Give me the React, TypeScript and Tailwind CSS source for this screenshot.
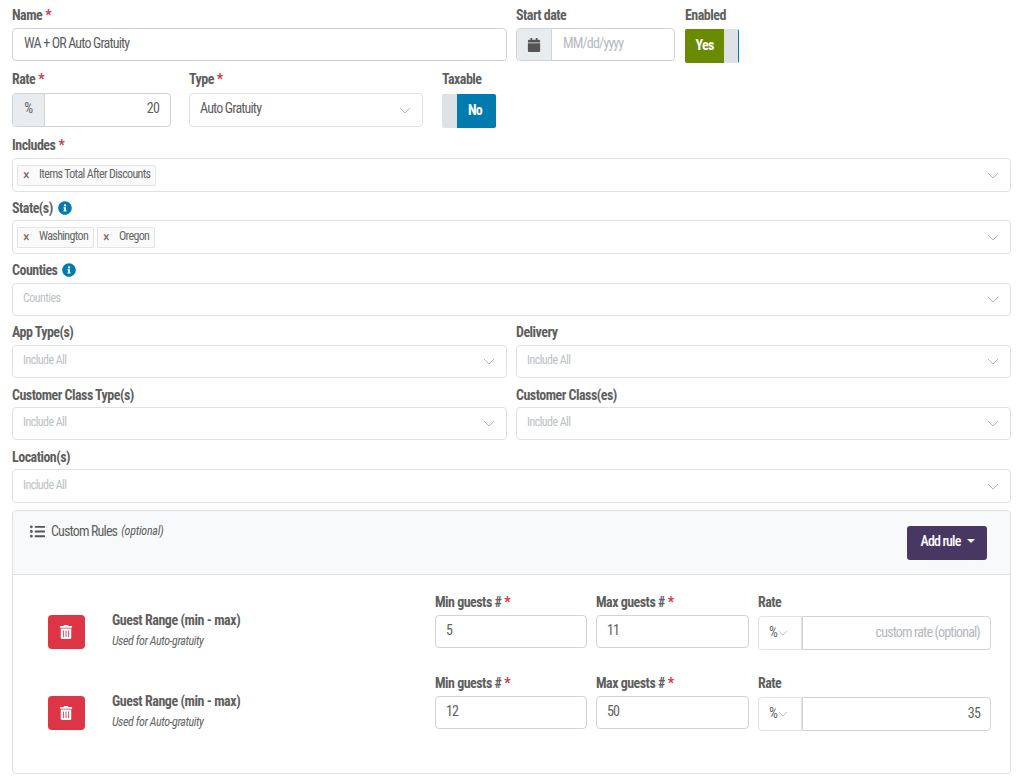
import React from 'react';
import { FaCalendar, FaInfoCircle, FaListUl, FaTrashAlt } from 'react-icons/fa';

const Chevron = () => (
  <svg width="12" height="7" viewBox="0 0 12 7" fill="none" className="shrink-0">
    <path d="M1 1l5 5 5-5" stroke="#b4b7bb" strokeWidth="1" />
  </svg>
);

const Label = ({ text, required, info, className = 'mb-[4px]' }: { text: string; required?: boolean; info?: boolean; className?: string }) => (
  <div className={`flex h-[18px] items-center text-[14px] font-bold leading-none tracking-[-0.037em] text-[#5f5f5f] ${className}`}>
    <span>{text}</span>
    {required && <span className="ml-[3px] text-[#dc3545]">*</span>}
    {info && <FaInfoCircle className="ml-[5px] text-[14px] text-[#007bb0]" />}
  </div>
);

const Chip = ({ text }: { text: string }) => (
  <span className="flex h-[21px] items-center rounded-[2px] border border-[#e4e4e7] bg-[#fafafa] px-[5px] pb-[2px] text-[12px] tracking-[-0.055em] text-[#666]">
    <span className="mr-[10px] mt-[2px] text-[14px] text-[#7a6660]">×</span>
    {text}
  </span>
);

const SelectBox = ({ placeholder, value, chips, height = 'h-[33px]' }: { placeholder?: string; value?: string; chips?: string[]; height?: string }) => (
  <div className={`flex w-full items-center justify-between rounded-[4px] border border-[#e0e1e5] bg-white pr-[11px] ${height}`}>
    {chips ? (
      <div className="flex gap-[3px] pl-[4px]">
        {chips.map((c) => (
          <Chip key={c} text={c} />
        ))}
      </div>
    ) : value ? (
      <span className="pb-[3px] pl-[10px] text-[14px] tracking-[-0.06em] text-[#5f5f5f]">{value}</span>
    ) : (
      <span className="pb-[3px] pl-[10px] text-[12px] text-[#bcbfc4]">{placeholder}</span>
    )}
    <Chevron />
  </div>
);

const Rule = ({ min, max, rate }: { min: string; max: string; rate?: string }) => (
  <div className="flex h-[81px]">
    <div className="mt-[26px] ml-[35px] flex h-[34px] w-[37px] items-center justify-center rounded-[4px] bg-[#dc3545] text-[14px] text-white">
      <FaTrashAlt className="-ml-[1px]" />
    </div>
    <div className="ml-[27px] w-[323px] pt-[22px]">
      <div className="text-[14px] font-bold leading-[18px] tracking-[-0.032em] text-[#5f5f5f]">Guest Range (min - max)</div>
      <div className="mt-[4px] text-[12px] italic leading-[16px] tracking-[-0.035em] text-[#666]">Used for Auto-gratuity</div>
    </div>
    <div className="w-[152px]">
      <Label text="Min guests #" required className="mb-[4px] mt-[4px]" />
      <div className="flex h-[33px] items-center rounded-[4px] border border-[#ced4da] pb-[3px] pl-[10px] text-[14px] tracking-[-0.06em] text-[#5f5f5f]">{min}</div>
    </div>
    <div className="ml-[9px] w-[153px]">
      <Label text="Max guests #" required className="mb-[4px] mt-[4px]" />
      <div className="flex h-[33px] items-center rounded-[4px] border border-[#ced4da] pb-[3px] pl-[10px] text-[14px] tracking-[-0.06em] text-[#5f5f5f]">{max}</div>
    </div>
    <div className="ml-[9px] w-[233px]">
      <Label text="Rate" className="mb-[5px] mt-[4px]" />
      <div className="flex h-[34px]">
        <div className="flex w-[44px] items-center gap-[1px] rounded-l-[4px] border border-[#e0e1e5] pb-[2px] pl-[10px] text-[14px] text-[#5f5f5f]">
          %
          <svg width="10" height="6" viewBox="0 0 12 7" fill="none" className="mt-[2px]"><path d="M1 1l5 5 5-5" stroke="#b4b7bb" /></svg>
        </div>
        <div className={`flex flex-1 items-center justify-end rounded-r-[4px] border border-[#ced4da] pb-[2px] pr-[10px] text-[14px] tracking-[-0.06em] ${rate ? 'text-[#5f5f5f]' : 'text-[#b5b8bd]'}`}>
          {rate ?? 'custom rate (optional)'}
        </div>
      </div>
    </div>
  </div>
);

export default function App() {
  return (
    <div className="min-h-[781px] bg-white pl-[12px] pr-[11px] pt-[6px] font-['Roboto',sans-serif] [font-stretch:75%] tracking-[-0.035em] text-[#5f5f5f]">
      <div className="flex h-[55px]">
        <div className="w-[495px]">
          <Label text="Name" required />
          <div className="flex h-[33px] items-center rounded-[4px] border border-[#ced4da] pb-[2px] pl-[11px] text-[14px] tracking-[-0.06em]">WA + OR Auto Gratuity</div>
        </div>
        <div className="ml-[9px] w-[159px]">
          <Label text="Start date" />
          <div className="flex h-[33px] rounded-[4px] border border-[#ced4da]">
            <div className="flex w-[35px] items-center justify-center rounded-l-[4px] border-r border-[#ced4da] bg-[#e9ecef] text-[14px] text-[#555]">
              <FaCalendar />
            </div>
            <div className="flex items-center pb-[2px] pl-[11px] text-[14px] tracking-[-0.06em] text-[#b5b9c2]">MM/dd/yyyy</div>
          </div>
        </div>
        <div className="ml-[10px]">
          <Label text="Enabled" className="mb-[5px]" />
          <div className="flex h-[34px] w-[54px] overflow-hidden rounded-[2px]">
            <div className="flex w-[39px] items-center justify-center bg-[#6a8a00] pb-[2px] text-[14px] font-bold tracking-[-0.05em] text-white">Yes</div>
            <div className="w-[14px] bg-[#dee2e6]" />
            <div className="w-[1px] bg-[#007bb0]" />
          </div>
        </div>
      </div>

      <div className="mt-[9px] flex h-[57px]">
        <div className="w-[159px]">
          <Label text="Rate" required className="mb-[5px]" />
          <div className="flex h-[34px] rounded-[4px] border border-[#ced4da]">
            <div className="flex w-[32px] items-center justify-center rounded-l-[4px] border-r border-[#ced4da] bg-[#e9ecef] pb-[3px] text-[14px]">%</div>
            <div className="flex flex-1 items-center justify-end pb-[3px] pr-[11px] text-[14px] tracking-[-0.06em]">20</div>
          </div>
        </div>
        <div className="ml-[18px] w-[234px]">
          <Label text="Type" required className="mb-[5px]" />
          <SelectBox value="Auto Gratuity" height="h-[34px]" />
        </div>
        <div className="ml-[19px]">
          <Label text="Taxable" className="mb-[6px]" />
          <div className="flex h-[34px] w-[54px] overflow-hidden rounded-[2px]">
            <div className="w-[15px] bg-[#dee2e6]" />
            <div className="flex flex-1 items-center justify-center bg-[#007bb0] pb-[2px] pr-[3px] text-[14px] font-bold tracking-[-0.05em] text-white">No</div>
          </div>
        </div>
      </div>

      <div className="mt-[9px]">
        <Label text="Includes" required />
        <SelectBox chips={['Items Total After Discounts']} height="h-[34px]" />
      </div>
      <div className="mt-[7px]">
        <Label text="State(s)" info className="mb-[3px]" />
        <SelectBox chips={['Washington', 'Oregon']} height="h-[34px]" />
      </div>
      <div className="mt-[7px]">
        <Label text="Counties" info />
        <SelectBox placeholder="Counties" />
      </div>
      <div className="mt-[7px] flex gap-[9px]">
        <div className="w-[495px]">
          <Label text="App Type(s)" />
          <SelectBox placeholder="Include All" />
        </div>
        <div className="flex-1">
          <Label text="Delivery" />
          <SelectBox placeholder="Include All" />
        </div>
      </div>
      <div className="mt-[8px] flex gap-[9px]">
        <div className="w-[495px]">
          <Label text="Customer Class Type(s)" className="mb-[3px]" />
          <SelectBox placeholder="Include All" />
        </div>
        <div className="flex-1">
          <Label text="Customer Class(es)" className="mb-[3px]" />
          <SelectBox placeholder="Include All" />
        </div>
      </div>
      <div className="mt-[8px]">
        <Label text="Location(s)" className="mb-[3px]" />
        <SelectBox placeholder="Include All" height="h-[34px]" />
      </div>

      <div className="mt-[7px] h-[264px] rounded-[4px] border border-[#e0e1e5]">
        <div className="flex h-[64px] justify-between rounded-t-[4px] border-b border-[#e0e1e5] bg-[#f8f9fa] pl-[17px] pr-[23px]">
          <div className="flex h-[40px] items-center text-[14px] tracking-[-0.06em]">
            <FaListUl className="mr-[6px] text-[15px] text-[#555]" />
            Custom Rules
            <span className="ml-[4px] text-[12px] italic tracking-[-0.02em]">(optional)</span>
          </div>
          <div className="mt-[15px] flex h-[34px] w-[80px] items-center justify-center rounded-[3px] bg-[#483763] pb-[3px] pl-[2px] text-[14px] font-medium tracking-[-0.06em] text-white">
            Add rule
            <span className="ml-[7px] mb-[1px] border-x-[4px] border-t-[4px] border-x-transparent border-t-white" />
          </div>
        </div>
        <div className="pt-[14px]">
          <Rule min="5" max="11" />
          <Rule min="12" max="50" rate="35" />
        </div>
      </div>
    </div>
  );
}
